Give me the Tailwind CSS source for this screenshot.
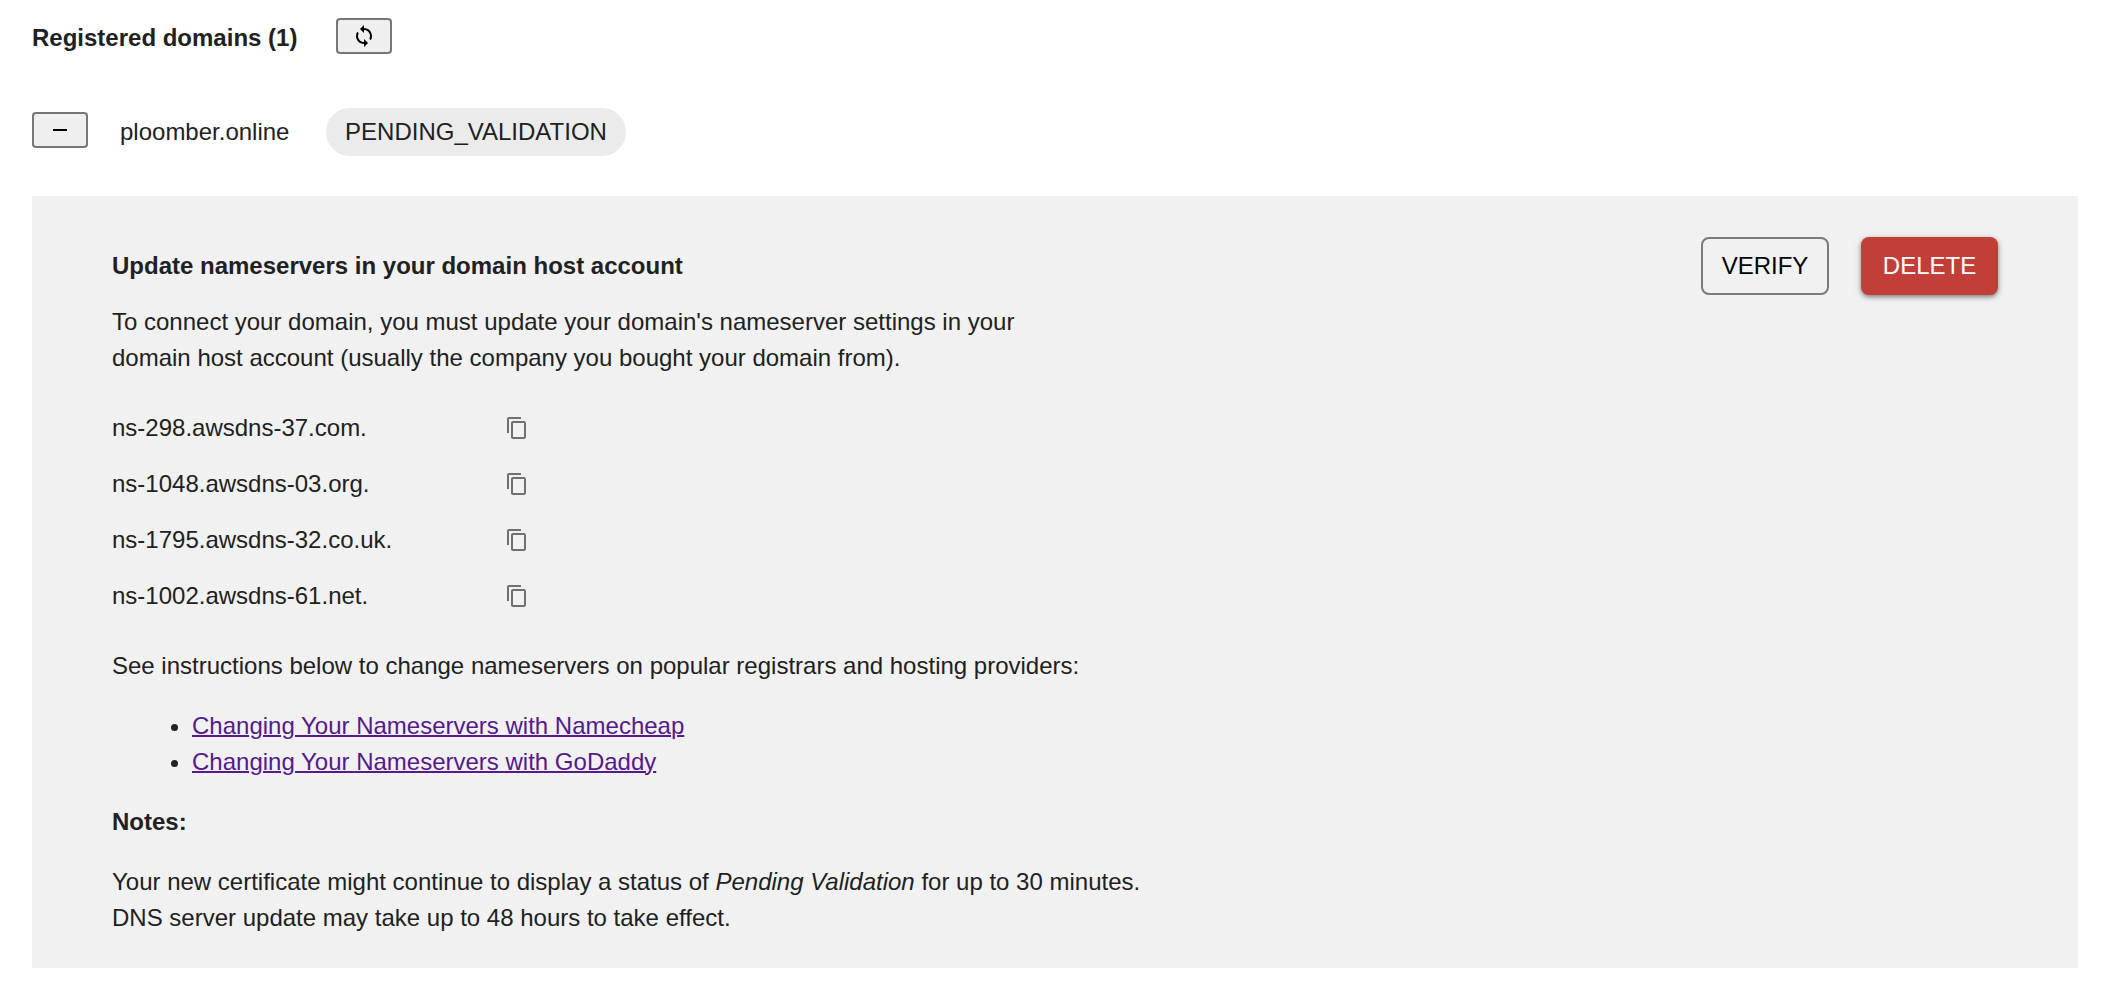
<!DOCTYPE html>
<html lang="en">
<head>
<meta charset="utf-8">
<meta name="viewport" content="width=device-width, initial-scale=1">
<title>Registered domains</title>
<script src="https://cdn.jsdelivr.net/npm/@tailwindcss/browser@4"></script>
</head>
<body class="bg-white font-['Liberation_Sans',Arial,sans-serif] text-2xl leading-9 text-[#212121]">
<svg class="hidden" aria-hidden="true">
  <symbol id="copy" viewBox="0 0 24 24"><path d="M16 1H4c-1.100 0-2 .9-2 2v14h2V3h12V1zm3 4H8c-1.100 0-2 .9-2 2v14c0 1.100.9 2 2 2h11c1.100 0 2-.9 2-2V7c0-1.100-.9-2-2-2zm0 16H8V7h11v14z"/></symbol>
</svg>
<main class="px-8 pt-4 pr-[38px]">
  <header class="flex h-11 items-center gap-8">
    <h1 class="min-w-68 font-bold">Registered domains (1)</h1>
    <button type="button" aria-label="Refresh" class="mb-1 flex h-9 w-14 items-center justify-center rounded border-2 border-[#767676] bg-[#efefef] text-black">
      <svg class="size-6" viewBox="0 0 24 24" fill="currentColor"><path d="M12 4V1L8 5l4 4V6c3.310 0 6 2.690 6 6 0 1.010-.25 1.970-.7 2.800l1.460 1.460C19.540 15.030 20 13.570 20 12c0-4.420-3.580-8-8-8zm0 14c-3.310 0-6-2.690-6-6 0-1.010.25-1.970.7-2.800L5.240 7.740C4.460 8.970 4 10.430 4 12c0 4.420 3.580 8 8 8v3l4-4-4-4v3z"/></svg>
    </button>
  </header>

  <div class="mt-12 flex items-center gap-8">
    <button type="button" aria-label="Collapse" aria-expanded="true" class="mb-1 flex h-9 w-14 items-center justify-center rounded border-2 border-[#767676] bg-[#efefef] text-black">
      <svg class="size-6" viewBox="0 0 24 24" fill="currentColor"><path d="M5 11h14v2H5z"/></svg>
    </button>
    <span class="min-w-[174px]">ploomber.online</span>
    <span class="flex h-12 min-w-75 items-center justify-center rounded-full bg-[#ebebeb] px-4">PENDING_VALIDATION</span>
  </div>

  <section class="mt-10 bg-[#f1f1f1] px-20 pt-10 pb-8">
    <div class="flex h-15 items-center justify-between">
      <h2 class="font-bold">Update nameservers in your domain host account</h2>
      <div class="flex gap-8">
        <button type="button" class="h-[58px] w-32 rounded-lg border-2 border-[#7a7a7a] text-black">VERIFY</button>
        <button type="button" class="h-[58px] w-[137px] rounded-lg bg-[#c23e38] text-white shadow-[0_2px_4px_rgba(0,0,0,0.4),0_2px_10px_rgba(0,0,0,0.12)]">DELETE</button>
      </div>
    </div>
    <p class="mt-2">To connect your domain, you must update your domain's nameserver settings in your<br>domain host account (usually the company you bought your domain from).</p>

    <ul class="mt-6">
      <li class="flex h-14 items-center"><span class="w-[385px]">ns-298.awsdns-37.com.</span><button type="button" aria-label="Copy" class="p-2 text-[#707070]"><svg class="size-6" fill="currentColor"><use href="#copy"/></svg></button></li>
      <li class="flex h-14 items-center"><span class="w-[385px]">ns-1048.awsdns-03.org.</span><button type="button" aria-label="Copy" class="p-2 text-[#707070]"><svg class="size-6" fill="currentColor"><use href="#copy"/></svg></button></li>
      <li class="flex h-14 items-center"><span class="w-[385px]">ns-1795.awsdns-32.co.uk.</span><button type="button" aria-label="Copy" class="p-2 text-[#707070]"><svg class="size-6" fill="currentColor"><use href="#copy"/></svg></button></li>
      <li class="flex h-14 items-center"><span class="w-[385px]">ns-1002.awsdns-61.net.</span><button type="button" aria-label="Copy" class="p-2 text-[#707070]"><svg class="size-6" fill="currentColor"><use href="#copy"/></svg></button></li>
    </ul>

    <p class="mt-6">See instructions below to change nameservers on popular registrars and hosting providers:</p>
    <ul class="mt-6 list-disc pl-20">
      <li><a href="#" class="text-[#551a8b] underline decoration-2">Changing Your Nameservers with Namecheap</a></li>
      <li><a href="#" class="text-[#551a8b] underline decoration-2">Changing Your Nameservers with GoDaddy</a></li>
    </ul>
    <h3 class="mt-6 font-bold">Notes:</h3>
    <p class="mt-6">Your new certificate might continue to display a status of <em>Pending Validation</em> for up to 30 minutes.<br>DNS server update may take up to 48 hours to take effect.</p>
  </section>
</main>
</body>
</html>
